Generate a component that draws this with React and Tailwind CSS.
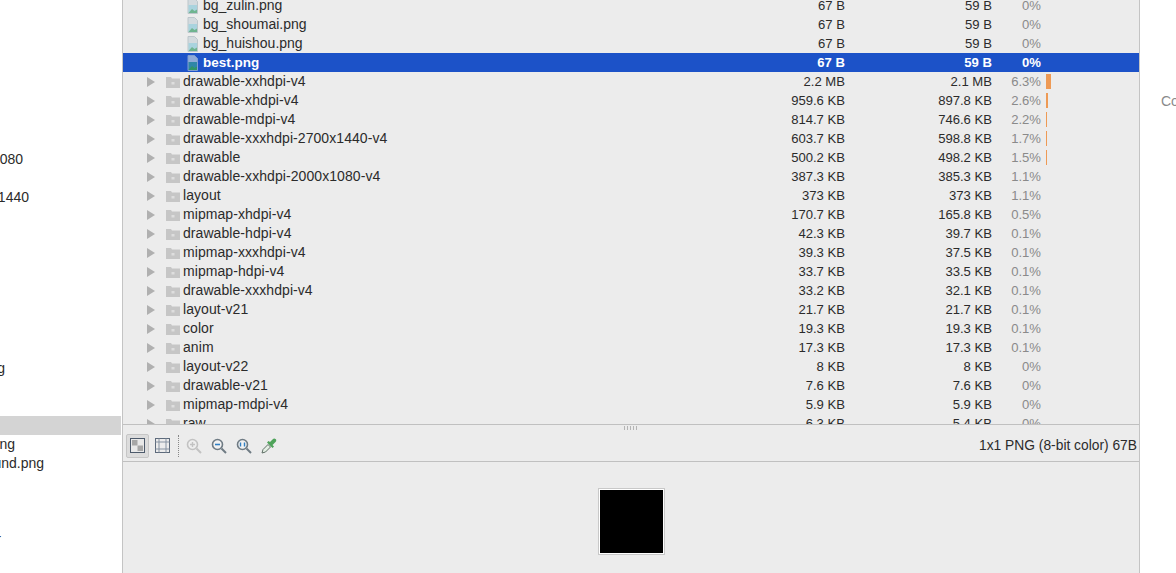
const sans = 'font-["Liberation_Sans",Arial,sans-serif]';

const imageRows = [
  ['bg_zulin.png', '67 B', '59 B', '0%'],
  ['bg_shoumai.png', '67 B', '59 B', '0%'],
  ['bg_huishou.png', '67 B', '59 B', '0%'],
];

const folderRows = [
  ['drawable-xxhdpi-v4', '2.2 MB', '2.1 MB', '6.3%', 5],
  ['drawable-xhdpi-v4', '959.6 KB', '897.8 KB', '2.6%', 2],
  ['drawable-mdpi-v4', '814.7 KB', '746.6 KB', '2.2%', 1],
  ['drawable-xxxhdpi-2700x1440-v4', '603.7 KB', '598.8 KB', '1.7%', 1],
  ['drawable', '500.2 KB', '498.2 KB', '1.5%', 1],
  ['drawable-xxhdpi-2000x1080-v4', '387.3 KB', '385.3 KB', '1.1%', 0],
  ['layout', '373 KB', '373 KB', '1.1%', 0],
  ['mipmap-xhdpi-v4', '170.7 KB', '165.8 KB', '0.5%', 0],
  ['drawable-hdpi-v4', '42.3 KB', '39.7 KB', '0.1%', 0],
  ['mipmap-xxxhdpi-v4', '39.3 KB', '37.5 KB', '0.1%', 0],
  ['mipmap-hdpi-v4', '33.7 KB', '33.5 KB', '0.1%', 0],
  ['drawable-xxxhdpi-v4', '33.2 KB', '32.1 KB', '0.1%', 0],
  ['layout-v21', '21.7 KB', '21.7 KB', '0.1%', 0],
  ['color', '19.3 KB', '19.3 KB', '0.1%', 0],
  ['anim', '17.3 KB', '17.3 KB', '0.1%', 0],
  ['layout-v22', '8 KB', '8 KB', '0%', 0],
  ['drawable-v21', '7.6 KB', '7.6 KB', '0%', 0],
  ['mipmap-mdpi-v4', '5.9 KB', '5.9 KB', '0%', 0],
  ['raw', '6.3 KB', '5.4 KB', '0%', 0],
];

// file tree on the left: only the tail of each name is on screen, the rest runs off the left edge
const sideRows = [
  { text: 'drawable-xxhdpi-2000x1080', end: 23 },
  null,
  { text: 'drawable-xxxhdpi-2700x1440', end: 29 },
  ...Array(8).fill(null),
  { text: 'loading.png', end: 5 },
  null,
  null,
  { selected: true },
  { text: 'bg_shoumai.png', end: 15 },
  { text: 'splash_background.png', end: 44 },
  null,
  null,
  null,
  { text: 'icon_launcher', end: 1 },
];

function FileIcon({ selected }) {
  return (
    <svg width="11" height="16" viewBox="0 0 11 16" className="shrink-0">
      <path d="M1 0.5H7.5L10.5 3.5V15.5H1Z" fill={selected ? '#8faad8' : '#d3dade'} stroke={selected ? '#7f9dd0' : '#bcc6cb'} />
      <rect x="1.5" y="7" width="8.5" height="8" fill={selected ? '#2f86a8' : '#a9d3de'} />
      <path d="M1.5 15L5 11L7.5 13L10 11.5V15Z" fill={selected ? '#2f9467' : '#6fb48f'} />
    </svg>
  );
}

function FolderIcon() {
  return (
    <svg width="14" height="12" viewBox="0 0 14 12" className="shrink-0">
      <path d="M0 1H5L6 2.5H14V12H0Z" fill="#c6c6c6" />
      <rect x="5.5" y="6" width="3" height="2.5" fill="#dedede" />
    </svg>
  );
}

function Arrow() {
  return (
    <svg width="8" height="10" viewBox="0 0 8 10" className="shrink-0">
      <path d="M0 0L8 5L0 10Z" fill="#b0b0b0" />
    </svg>
  );
}

function SizeCells({ size, packed, pct, bar, selected }) {
  const strong = selected ? 'font-bold text-white' : 'text-[#2b2b2b]';
  return (
    <>
      <span className={`shrink-0 text-[13.1px] ${strong}`}>{size}</span>
      <span className={`w-[147px] shrink-0 text-right text-[13.1px] ${strong}`}>{packed}</span>
      <span className={`w-[49px] shrink-0 text-right text-[13.1px] ${selected ? 'font-bold text-white' : 'text-[#8a8a8a]'}`}>{pct}</span>
      <span className="flex h-full w-[98px] shrink-0 items-center pl-[5px]">
        {bar > 0 && <span className="h-[15px] bg-[#ee9a55]" style={{ width: bar }} />}
      </span>
    </>
  );
}

function ImageRow({ row, selected }) {
  const [name, size, packed, pct] = row;
  return (
    <div className={`flex h-[19px] items-center pl-[64px] ${selected ? 'bg-[#1c52c8]' : ''}`}>
      <FileIcon selected={selected} />
      <span className={`ml-[5px] flex-1 ${selected ? 'text-[13.5px] font-bold text-white' : 'text-[#2b2b2b]'}`}>{name}</span>
      <SizeCells size={size} packed={packed} pct={pct} selected={selected} />
    </div>
  );
}

function FolderRow({ row }) {
  const [name, size, packed, pct, bar] = row;
  return (
    <div className="flex h-[19px] items-center pl-[24px]">
      <Arrow />
      <span className="ml-[11px]"><FolderIcon /></span>
      <span className="ml-[3px] flex-1 tracking-[0.07px] text-[#2b2b2b]">{name}</span>
      <SizeCells size={size} packed={packed} pct={pct} bar={bar} />
    </div>
  );
}

function ToolbarIcons() {
  return (
    <div className="flex items-center pl-[3px]">
      <div className="flex h-[24px] w-[23px] items-center justify-center rounded-[2px] border border-[#c6c6c6] bg-[#dcdcdc]">
        <svg width="15" height="15" viewBox="0 0 15 15">
          <rect x="0.5" y="0.5" width="14" height="14" fill="#e8e8e8" stroke="#4d5a6b" />
          <rect x="2" y="2" width="5.5" height="5.5" fill="#a6a6a6" />
          <rect x="7.5" y="7.5" width="5.5" height="5.5" fill="#a6a6a6" />
        </svg>
      </div>
      <svg width="15" height="15" viewBox="0 0 15 15" className="ml-[6px]">
        <rect x="0.5" y="0.5" width="14" height="14" fill="none" stroke="#5d6a7b" />
        <path d="M0.5 4H14.5M0.5 11H14.5M4 0.5V14.5M11 0.5V14.5" stroke="#8793a2" fill="none" />
      </svg>
      <div className="ml-[8px] h-[22px] border-l border-dotted border-[#888]" />
      <svg width="16" height="16" viewBox="0 0 16 16" className="ml-[7px]">
        <circle cx="6.5" cy="6.5" r="5" fill="#eee" stroke="#c2c2c2" strokeWidth="1.6" />
        <path d="M4 6.5H9M6.5 4V9" stroke="#c2c2c2" strokeWidth="1.4" />
        <path d="M10.5 10.5L15 15" stroke="#c2c2c2" strokeWidth="2" />
      </svg>
      <svg width="16" height="16" viewBox="0 0 16 16" className="ml-[9px]">
        <circle cx="6.5" cy="6.5" r="5" fill="#f2f2f2" stroke="#6f7b84" strokeWidth="1.6" />
        <path d="M4 6.5H9" stroke="#2f7fc4" strokeWidth="1.6" />
        <path d="M10.5 10.5L15 15" stroke="#6f7b84" strokeWidth="2" />
      </svg>
      <svg width="16" height="16" viewBox="0 0 16 16" className="ml-[9px]">
        <circle cx="6.5" cy="6.5" r="5" fill="#f2f2f2" stroke="#6f7b84" strokeWidth="1.6" />
        <path d="M4.5 4.5V8.5M8.5 4.5V8.5" stroke="#2f7fc4" strokeWidth="1.4" />
        <path d="M10.5 10.5L15 15" stroke="#6f7b84" strokeWidth="2" />
      </svg>
      <svg width="16" height="16" viewBox="0 0 16 16" className="ml-[9px]">
        <path d="M1 15L2 11.5L7 6.5L9.5 9L4.5 14Z" fill="#e4efe4" stroke="#5f6f66" />
        <path d="M6 4.5L11.5 10L13 8.5L11.5 7L14.5 4C15.5 3 15.5 1.5 14.5 1C13.5 0 12.5 0.5 11.5 1.5L9 4L7.5 3Z" fill="#4fa35a" />
      </svg>
    </div>
  );
}

function SideRow({ row }) {
  if (!row) return <div className="h-[19px]" />;
  if (row.selected) return <div className="mr-px h-[19px] bg-[#d4d4d4]" />;
  return (
    <div className="flex h-[19px] justify-end whitespace-nowrap" style={{ width: row.end }}>
      {row.text}
    </div>
  );
}

export default function App() {
  return (
    <div className={`flex h-[573px] w-[1176px] overflow-hidden bg-white text-[14px] leading-[19px] ${sans}`}>
      <aside className="w-[122px] shrink-0 pt-[150px] text-[#2b2b2b]">
        {sideRows.map((row, i) => <SideRow key={i} row={row} />)}
      </aside>
      <main className="flex w-[1018px] shrink-0 flex-col border-x border-[#c4c4c4] bg-[#ececec]">
        <div className="h-[425px] shrink-0 overflow-hidden border-b border-[#c0c0c0]">
          <div className="-mt-[4px]">
            {imageRows.map((r) => <ImageRow key={r[0]} row={r} />)}
            <ImageRow row={['best.png', '67 B', '59 B', '0%']} selected />
            {folderRows.map((r) => <FolderRow key={r[0]} row={r} />)}
          </div>
        </div>
        <div className="relative flex h-[37px] shrink-0 items-center justify-between border-b border-[#c0c0c0] pt-[5px] pr-[2px]">
          <ToolbarIcons />
          <span className="text-[13.8px] text-[#2b2b2b]">1x1 PNG (8-bit color) 67B</span>
          <div className="absolute left-[501px] top-[1px] h-[4px] w-[14px] bg-[repeating-linear-gradient(90deg,#b4b4b4_0,#b4b4b4_1px,transparent_1px,transparent_3px)]" />
        </div>
        <div className="flex flex-1 justify-center">
          <div className="mt-[26px] h-[67px] w-[67px] shrink-0 border border-[#c8c8c8] bg-black outline outline-1 outline-white -outline-offset-2" />
        </div>
      </main>
      <div className="pl-[21px] pt-[92px] text-[#8a8a8a]">Co</div>
    </div>
  );
}
